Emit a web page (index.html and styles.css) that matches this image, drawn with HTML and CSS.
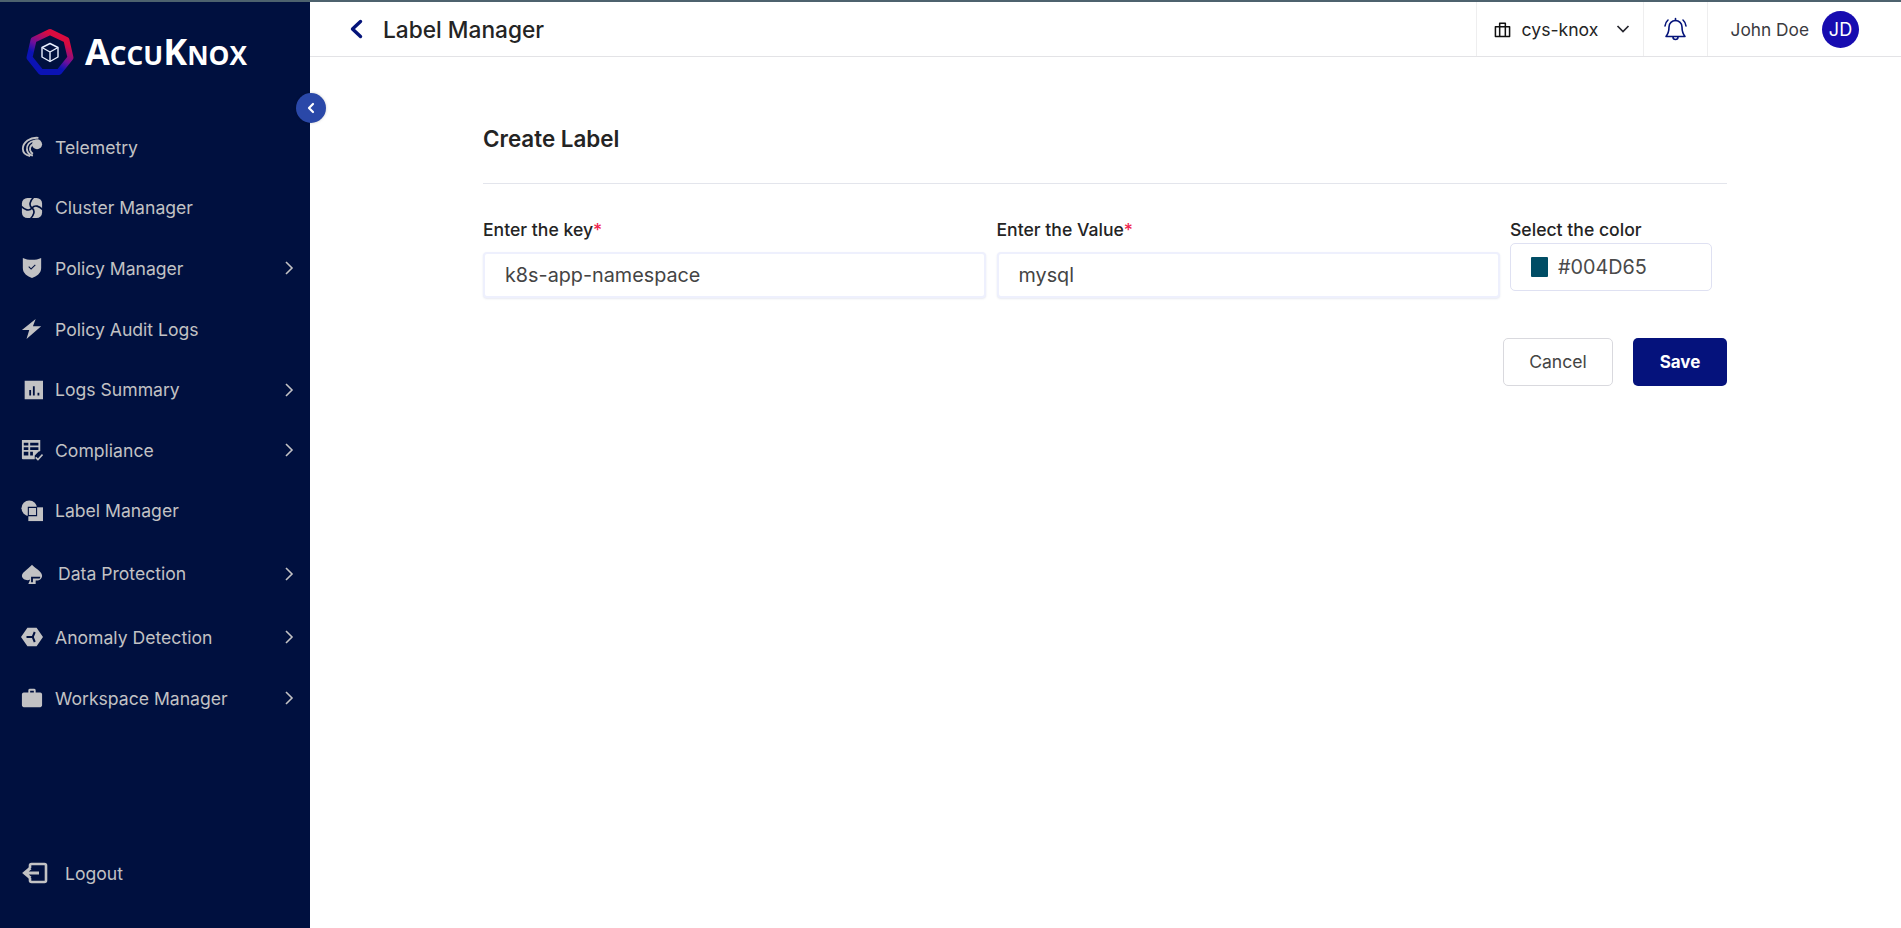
FILE: index.html
```html
<!DOCTYPE html>
<html lang="en">
<head>
  <meta charset="UTF-8">
  <title>Label Manager</title>
  <link rel="stylesheet" href="styles.css">
</head>
<body>
<div class="app">
  <aside class="sidebar">
    <div class="logo">
      <svg class="logo-mark" width="50" height="50" viewBox="0 0 50 50">
        <defs>
          <linearGradient id="ring" x1="0.75" y1="0.1" x2="0.3" y2="0.85">
            <stop offset="0.1" stop-color="#d90b3f"/>
            <stop offset="0.55" stop-color="#6d0f9c"/>
            <stop offset="0.8" stop-color="#0b13b4"/>
          </linearGradient>
        </defs>
        <polygon points="25,4 41.4,11.9 45.5,29.7 34.1,43.9 15.9,43.9 4.5,29.7 8.6,11.9" fill="none" stroke="url(#ring)" stroke-width="6" stroke-linejoin="round"/>
        <g fill="none" stroke="#e8efff" stroke-width="1.4" stroke-linejoin="round">
          <path d="M25 15.5l8 4v9.5l-8 4.5-8-4.500v-9.500z"/>
          <path d="M17 19.5l8 4.5 8-4.500M25 24v9.500"/>
        </g>
      </svg>
      <span class="logo-text"><span class="big">A</span>CCU<span class="big">K</span>NOX</span>
    </div>
    <button class="collapse" aria-label="Collapse">
      <svg width="10" height="12" viewBox="0 0 10 12"><path d="M7 2L3 6l4 4" fill="none" stroke="#fff" stroke-width="2.200" stroke-linecap="round" stroke-linejoin="round"/></svg>
    </button>

    <nav class="nav">
      <a class="nav-item">
        <svg class="ico" viewBox="0 0 24 24">
          <g class="ico-line">
            <path d="M19 2C10 1 2 7 2 14c0 4 3 7 8 8"/>
            <path d="M15 5C9 6 6 10 6.500 15c.5 3 3 5.500 6.500 6.500"/>
            <path d="M13 9c-2.500 1.500-3.500 4-3 6.500.5 1.500 1.500 3 3 4"/>
          </g>
          <circle cx="17.500" cy="9" r="5.500"/>
        </svg>
        <span>Telemetry</span>
      </a>
      <a class="nav-item">
        <svg class="ico" viewBox="0 0 24 24">
          <rect x="1" y="1" width="22" height="22" rx="6"/>
          <g class="ico-cut">
            <path d="M12 12C8 9 10 4 14 0"/>
            <path d="M12 12c3-4 8-2 12 2"/>
            <path d="M12 12c4 3 2 8-2 12"/>
            <path d="M12 12c-3 4-8 2-12-2"/>
          </g>
        </svg>
        <span>Cluster Manager</span>
      </a>
      <a class="nav-item">
        <svg class="ico" viewBox="0 0 24 24"><path fill-rule="evenodd" d="M2 1c3 1.500 6 2 10 2s7-.5 10-2v11c0 6-5 9-10 11C7 21 2 18 2 12z M8 11l3 3 5-5-.8-.8L11 12.400 8.800 10.200z"/></svg>
        <span>Policy Manager</span>
        <svg class="caret" viewBox="0 0 10 16"><path d="M2 2l6 6-6 6"/></svg>
      </a>
      <a class="nav-item">
        <svg class="ico" viewBox="0 0 24 24"><path d="M16 1L1 13h8L6 23l16-14h-9z"/></svg>
        <span>Policy Audit Logs</span>
      </a>
      <a class="nav-item">
        <svg class="ico" viewBox="0 0 24 24"><path fill-rule="evenodd" d="M4 2h20v20H4z M9 12v6h2v-6z M13 8v10h2V8z M18 15v3h2v-3z"/></svg>
        <span>Logs Summary</span>
        <svg class="caret" viewBox="0 0 10 16"><path d="M2 2l6 6-6 6"/></svg>
      </a>
      <a class="nav-item">
        <svg class="ico" viewBox="0 0 24 24"><path fill-rule="evenodd" d="M1 1h20v12l-2 1-4 4v4H2a1 1 0 0 1-1-1z M3 4v3h5V4z M10 4v3h9V4z M3 9v3h5V9z M10 9v3h9V9z M3 14v4h5v-4z M10 14v4h3v-4z"/><path d="M16 20l2.500 2.500L23.500 17" fill="none" stroke="#c2c2c4" stroke-width="1.800"/></svg>
        <span>Compliance</span>
        <svg class="caret" viewBox="0 0 10 16"><path d="M2 2l6 6-6 6"/></svg>
      </a>
      <a class="nav-item">
        <svg class="ico" viewBox="0 0 24 24">
          <circle cx="9" cy="9" r="8.500"/>
          <rect x="8" y="8" width="16" height="15"/>
          <path class="ico-cut-thin" d="M17 17H8V8h9z"/>
        </svg>
        <span>Label Manager</span>
      </a>
      <a class="nav-item nav-data">
        <svg class="ico" viewBox="0 0 24 24"><path fill-rule="evenodd" d="M12 2c2 3 11 7 11 12 0 3-3 6-7 5v4H8l2-5c-3 2-9 0-9-4 0-4 9-9 11-12z M11 15v2h9c.5 0 1-1 1-2z M11 17v4h2v-4z"/></svg>
        <span>Data Protection</span>
        <svg class="caret" viewBox="0 0 10 16"><path d="M2 2l6 6-6 6"/></svg>
      </a>
      <a class="nav-item">
        <svg class="ico" viewBox="0 0 24 24"><path fill-rule="evenodd" d="M7 2h10l7 10-7 10H7L0 12z M6 11v2h6l2 5 2-1-2-5 2-5-2-1-2 5z"/></svg>
        <span>Anomaly Detection</span>
        <svg class="caret" viewBox="0 0 10 16"><path d="M2 2l6 6-6 6"/></svg>
      </a>
      <a class="nav-item">
        <svg class="ico" viewBox="0 0 24 24"><path fill-rule="evenodd" d="M8 6V3.500C8 3 8.500 2 9.500 2h5c1 0 1.500 1 1.500 1.500V6h5c1 0 2 1 2 2v12c0 1-1 2-2 2H3c-1 0-2-1-2-2V8c0-1 1-2 2-2z M10 4v2h4V4z"/></svg>
        <span>Workspace Manager</span>
        <svg class="caret" viewBox="0 0 10 16"><path d="M2 2l6 6-6 6"/></svg>
      </a>
    </nav>

    <a class="logout">
      <svg class="ico-logout" viewBox="0 0 26 22"><path d="M8 6V3.500A1.500 1.500 0 0 1 9.500 2h13A1.500 1.500 0 0 1 24 3.500v15a1.500 1.500 0 0 1-1.500 1.500h-13A1.500 1.500 0 0 1 8 18.500V16" fill="none" stroke="#c2c2c4" stroke-width="2.600"/><path d="M17 11H5M8.500 6L2.500 11l6 5" fill="none" stroke="#c2c2c4" stroke-width="3"/></svg>
      <span>Logout</span>
    </a>
  </aside>

  <div class="content">
    <header class="topbar">
      <svg class="back" viewBox="0 0 14 20"><path d="M11.500 2.500L3.500 10l8 7.500" fill="none" stroke="#05147a" stroke-width="3.400" stroke-linecap="round" stroke-linejoin="round"/></svg>
      <h1 class="page-title">Label Manager</h1>
      <div class="top-right">
        <div class="cell org">
          <svg class="org-ico" viewBox="0 0 18 18"><path d="M1.500 6h15v10.500h-15z M6 6V2.500h6V6 M6 6v10.500 M12 6v10.500" fill="none" stroke="#111" stroke-width="1.600" stroke-linejoin="round"/></svg>
          <span class="org-name">cys-knox</span>
          <svg class="org-caret" viewBox="0 0 14 10"><path d="M1.500 2l5.500 5.500L12.500 2" fill="none" stroke="#26262e" stroke-width="1.700"/></svg>
        </div>
        <div class="cell bell">
          <svg width="25" height="25" viewBox="0 0 25 25" fill="none" stroke="#05147a" stroke-width="1.600" stroke-linecap="round" stroke-linejoin="round"><path d="M12.500 3.500a6.500 6.500 0 0 0-6.500 6.500c0 4-1 7-3 9.500h19c-2-2.500-3-5.500-3-9.500a6.500 6.500 0 0 0-6.500-6.500z"/><path d="M10 20a2.500 2.500 0 0 0 5 0M12.500 1.500v2M5 3A9 9 0 0 0 2 9M20 3a9 9 0 0 1 3 6"/></svg>
        </div>
        <div class="user">
          <span class="user-name">John Doe</span>
          <span class="avatar">JD</span>
        </div>
      </div>
    </header>

    <main class="main">
      <h2 class="form-title">Create Label</h2>
      <div class="form-row">
        <div class="field">
          <label class="field-label">Enter the key<span class="req">*</span></label>
          <input class="text-input" type="text" value="k8s-app-namespace">
        </div>
        <div class="field">
          <label class="field-label">Enter the Value<span class="req">*</span></label>
          <input class="text-input" type="text" value="mysql">
        </div>
        <div class="field field-color">
          <label class="field-label">Select the color</label>
          <div class="color-input"><span class="swatch"></span>#004D65</div>
        </div>
      </div>
      <div class="actions">
        <button class="btn btn-cancel">Cancel</button>
        <button class="btn btn-save">Save</button>
      </div>
    </main>
  </div>
</div>
</body>
</html>
```

FILE: styles.css
```css
* { box-sizing: border-box; }
html, body { margin: 0; height: 100%; overflow: hidden; background: #fff; }
body { font-family: Inter, "Liberation Sans", sans-serif; color: #242424; }

.app { display: flex; height: 100%; border-top: 2px solid #4d626e; }

/* sidebar */
.sidebar { position: relative; width: 310px; flex: none; background: #00103f; display: flex; flex-direction: column; }
.logo { display: flex; align-items: center; height: 76px; margin-top: 13px; padding-left: 25px; }
.logo-text { margin-left: 10px; margin-top: -3px; font-family: "Open Sans", sans-serif; font-weight: 700; font-size: 26.300px; color: #fff; line-height: 1; }
.logo-text .big { font-size: 36px; }
.collapse { position: absolute; top: 91px; right: -16px; width: 30px; height: 30px; border: 0; padding: 0; border-radius: 50%; background: #2a48a8; display: flex; align-items: center; justify-content: center; box-shadow: 0 0 3px rgba(0,0,0,.2); }

.nav { margin-top: 26px; }
.nav-item { display: flex; align-items: center; height: 60.6px; padding: 0 16px 0 21px; color: #c2c2c4; font-size: 17.6px; }
.nav-item > span { margin-left: 12px; }
.nav-data { height: 65px; margin-bottom: 1px; }
.nav-data > span { margin-left: 15px; }
.ico { width: 22px; height: 22px; flex: none; fill: #c2c2c4; }
.ico-line { fill: none; stroke: #c2c2c4; stroke-width: 2; }
.ico-cut { fill: none; stroke: #00103f; stroke-width: 1.800; }
.ico-cut-thin { fill: none; stroke: #00103f; stroke-width: 1.200; }
.caret { width: 10px; height: 16px; margin-left: auto; fill: none; stroke: #c2c2c4; stroke-width: 1.600; }

.logout { display: flex; align-items: center; margin-top: auto; margin-bottom: 44px; padding-left: 22px; color: #c2c2c4; font-size: 17.6px; }
.logout span { margin-left: 17px; }
.ico-logout { width: 26px; height: 22px; flex: none; }

/* top bar */
.content { flex: 1; min-width: 0; display: flex; flex-direction: column; }
.topbar { display: flex; align-items: center; height: 55px; padding-left: 39px; border-bottom: 1px solid #e3e3e6; }
.back { width: 14px; height: 20px; }
.page-title { margin: 2px 0 0 20px; font-size: 22.7px; font-weight: 500; line-height: 1; }
.top-right { display: flex; align-items: stretch; height: 100%; margin-left: auto; margin-right: 42px; }
.cell { display: flex; align-items: center; border-left: 1px solid #eeeeef; }
.org { width: 167px; padding-left: 17px; }
.org-ico { width: 17px; height: 17px; }
.org-name { margin-left: 11px; font-size: 17.6px; }
.org-caret { width: 14px; height: 10px; margin-left: 18px; }
.bell { width: 64px; justify-content: center; }
.user { display: flex; align-items: center; border-left: 1px solid #eeeeef; padding-left: 23px; }
.user-name { font-size: 17.3px; color: #3a3a40; }
.avatar { display: flex; align-items: center; justify-content: center; width: 37px; height: 37px; margin-left: 13px; border-radius: 50%; background: #170cb0; color: #fff; font-size: 18px; }

/* form */
.main { padding: 68px 174px 0 173px; }
.form-title { margin: 0; padding-bottom: 31px; border-bottom: 1px solid #e3e5ec; font-size: 22.4px; font-weight: 600; line-height: 27px; }
.form-row { display: grid; grid-template-columns: 503px 503px 202px; column-gap: 10.500px; margin-top: 36px; }
.field-label { display: block; font-size: 17.6px; font-weight: 500; line-height: 20px; margin-bottom: 12px; }
.req { color: #f0264f; }
.text-input { display: block; width: 100%; height: 46px; padding: 0 20px; border: 2px solid #eef0fd; border-radius: 4px; font: 19.8px Inter, sans-serif; color: #444; outline: none; box-shadow: 0 1px 2px rgba(60,70,140,.12); }
.field-color .field-label { margin-bottom: 3px; }
.color-input { display: flex; align-items: center; height: 48px; padding-left: 20px; border: 1px solid #dfe1f2; border-radius: 5px; font-size: 19.8px; color: #4a4a4a; }
.swatch { width: 17px; height: 20px; margin-right: 10px; border-radius: 1px; background: #004d65; }

.actions { display: flex; justify-content: flex-end; gap: 20px; margin-top: 40px; }
.btn { height: 48px; border-radius: 5px; font-family: Inter, sans-serif; font-size: 17.6px; }
.btn-cancel { width: 110px; background: #fff; border: 1px solid #d9d9de; color: #444; padding-bottom: 2px; }
.btn-save { width: 94px; background: #05127c; border: 0; color: #fff; font-size: 17px; font-weight: 700; }
```
